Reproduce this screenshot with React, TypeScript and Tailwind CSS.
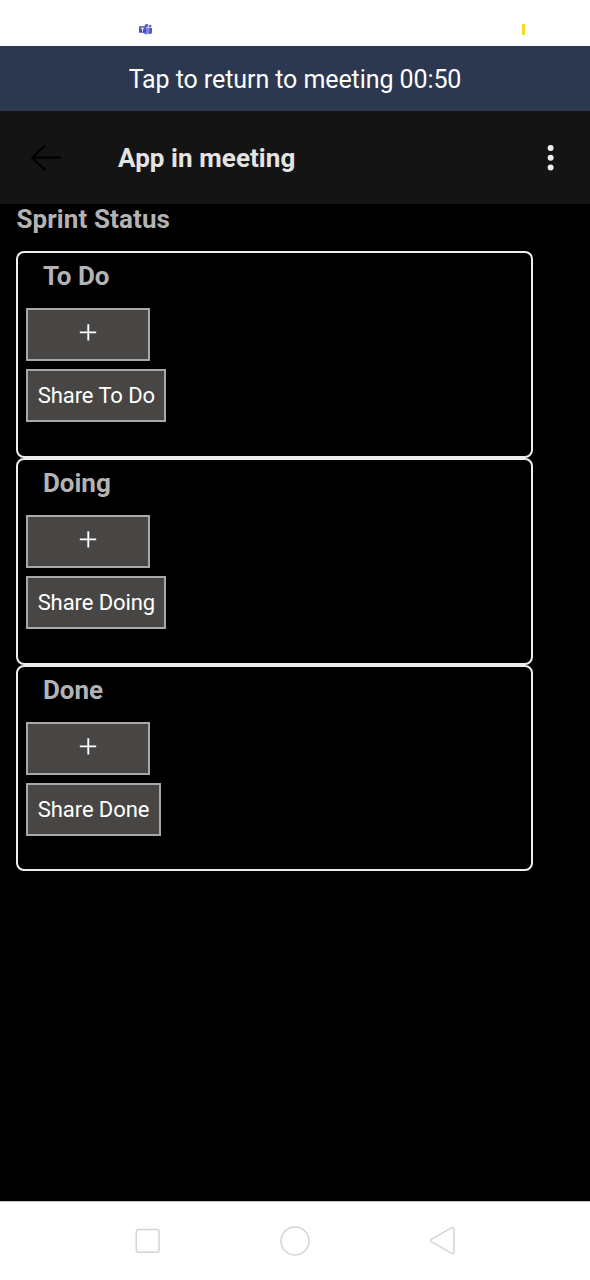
import React from "react";

type Column = { title: string; shareWidth: string };

const columns: Column[] = [
  { title: "To Do", shareWidth: "w-[140px]" },
  { title: "Doing", shareWidth: "w-[140px]" },
  { title: "Done", shareWidth: "w-[134.4px]" },
];

function TeamsIcon() {
  return (
    <svg width="15" height="14" viewBox="0 0 15 14" aria-hidden="true">
      <circle cx="8.6" cy="2.6" r="1.9" fill="#6268cc" />
      <circle cx="12.2" cy="2.9" r="1.2" fill="#5057bd" />
      <path d="M10 4.8h4v4a2 2 0 0 1-3 2z" fill="#5057bd" />
      <path d="M5 4.8h6.5v4a3.3 3.3 0 0 1-6.5 0z" fill="#7b83eb" />
      <rect x="1" y="3.2" width="7" height="6.6" rx=".6" fill="#484fb8" />
      <path d="M2.7 5.2h3.6M4.5 5.2v3.3" stroke="#fff" strokeWidth="1" />
    </svg>
  );
}

function StatusColumn({ title, shareWidth }: Column) {
  return (
    <section className="flex h-[206.8px] w-[516.6px] flex-col items-start rounded-[8px] border-2 border-[#eeeeee] pl-2">
      <h2 className="ml-[16.5px] mt-[8.4px] h-[30px] whitespace-nowrap text-[26px] font-bold leading-[30px] text-[#b3b3b3]">{title}</h2>
      <button className="mt-[16.6px] flex h-[53px] w-[124px] items-center justify-center border-2 border-[#a8a8a8] bg-[#484644]" aria-label="Add">
        <svg width="18" height="18" viewBox="0 0 18 18" className="-mt-[5px]" stroke="#fff" strokeWidth="1.9">
          <path d="M.8 9.4h16.4M9.3 1.2v16.4" />
        </svg>
      </button>
      <button className={`mt-[8px] flex h-[53px] items-center justify-center whitespace-nowrap border-2 border-[#a8a8a8] bg-[#484644] pt-px text-[22px] leading-[26px] tracking-[-0.08px] text-white ${shareWidth}`}>
        Share {title}
      </button>
    </section>
  );
}

export default function App() {
  return (
    <div className="flex h-[1280px] w-[590px] flex-col overflow-hidden bg-black font-['Roboto',sans-serif]">
      <div className="flex h-[46px] shrink-0 items-start justify-between bg-white pl-[138px] pr-[65px] pt-[23px]">
        <TeamsIcon />
        <span className="mt-[1px] h-[11px] w-[3px] bg-[#f5dc20]" />
      </div>
      <div className="flex h-[65px] shrink-0 items-center justify-center bg-[#2b384f] pt-[2px] text-[25px] leading-[30px] tracking-[-0.08px] text-white">
        <span className="whitespace-nowrap">Tap to return to meeting 00:50</span>
      </div>
      <header className="flex h-[92.6px] shrink-0 items-center bg-[#141414] pl-[30px] pr-[36px] pt-[1.4px]">
        <svg width="32" height="28" viewBox="0 0 32 28" fill="none" stroke="#000" strokeWidth="2.2" strokeLinecap="round" strokeLinejoin="round">
          <path d="M30 13.7H2M14.5 2L2 13.7l12.5 11.7" />
        </svg>
        <h1 className="ml-[56px] grow whitespace-nowrap text-[26px] font-bold leading-[30px] tracking-[0.07px] text-[#e4e4e4]">App in meeting</h1>
        <svg width="7" height="28" viewBox="0 0 7 28" fill="#ececec">
          <circle cx="3.6" cy="4" r="3" />
          <circle cx="3.6" cy="13.8" r="3" />
          <circle cx="3.6" cy="23.6" r="3" />
        </svg>
      </header>
      <main className="flex grow flex-col pl-[16.4px]">
        <h2 className="mb-[17.4px] h-[30px] text-[26px] font-bold leading-[30px] tracking-[0.1px] text-[#b3b3b3]">Sprint Status</h2>
        {columns.map((c) => (
          <StatusColumn key={c.title} {...c} />
        ))}
      </main>
      <nav className="flex h-[79px] shrink-0 justify-between border-t border-[#c8c8c8] bg-white pl-[132px] pr-[132px] pt-[24px]">
        <svg width="30" height="30" viewBox="0 0 30 30" fill="none" stroke="#d4d4d4" strokeWidth="1.5">
          <rect x="4.3" y="3.5" width="22.8" height="22.8" rx="2.5" />
        </svg>
        <svg width="30" height="30" viewBox="0 0 30 30" fill="none" stroke="#d4d4d4" strokeWidth="1.5">
          <circle cx="15" cy="14.9" r="14" />
        </svg>
        <svg width="30" height="30" viewBox="0 0 30 30" fill="none" stroke="#d4d4d4" strokeWidth="1.5" strokeLinejoin="round">
          <path d="M3.3 13.4L23.3 1.8Q26 .6 26 3.3V25.6Q26 28.6 23.3 27.1L3.3 15.7Q1.6 14.5 3.3 13.4Z" />
        </svg>
      </nav>
    </div>
  );
}
